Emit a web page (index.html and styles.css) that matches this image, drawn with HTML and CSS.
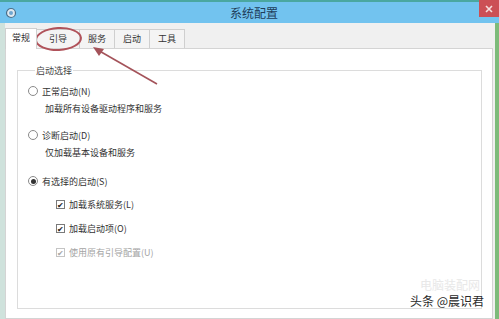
FILE: index.html
```html
<!DOCTYPE html>
<html lang="zh-CN">
<head>
    <meta charset="UTF-8">
    <title>系统配置</title>
    <link rel="stylesheet" href="styles.css">
</head>
<body>
    <div class="window">
        <div class="titlebar">
            <svg class="app-icon" width="12" height="12" viewBox="0 0 12 12">
                <circle cx="6" cy="6" r="4.5" fill="#dfe9f0" stroke="#4a6f8a" stroke-width="1.2"/>
                <circle cx="6" cy="6" r="2" fill="#6fa6d0"/>
            </svg>
            <div class="title">系统配置</div>
            <div class="close-btn">
                <svg width="8" height="8" viewBox="0 0 8 8">
                    <path d="M1 1 L7 7 M7 1 L1 7" stroke="#f6dede" stroke-width="1.6"/>
                </svg>
            </div>
        </div>

        <div class="body">
            <div class="tabs">
                <div class="tab active">常规</div>
                <div class="tab wide">引导</div>
                <div class="tab">服务</div>
                <div class="tab">启动</div>
                <div class="tab">工具</div>
            </div>

            <div class="panel">
                <fieldset class="group">
                    <legend>启动选择</legend>

                    <div class="option">
                        <span class="radio"></span>
                        <span>正常启动(N)</span>
                    </div>
                    <div class="desc">加载所有设备驱动程序和服务</div>

                    <div class="option">
                        <span class="radio"></span>
                        <span>诊断启动(D)</span>
                    </div>
                    <div class="desc">仅加载基本设备和服务</div>

                    <div class="option last">
                        <span class="radio checked"></span>
                        <span>有选择的启动(S)</span>
                    </div>

                    <div class="checks">
                        <div class="check">
                            <span class="box">&#10004;</span>
                            <span>加载系统服务(L)</span>
                        </div>
                        <div class="check">
                            <span class="box">&#10004;</span>
                            <span>加载启动项(O)</span>
                        </div>
                        <div class="check disabled">
                            <span class="box">&#10004;</span>
                            <span>使用原有引导配置(U)</span>
                        </div>
                    </div>
                </fieldset>
            </div>
        </div>
    </div>

    <!-- 标注 -->
    <div class="ring"></div>
    <svg class="arrow" width="499" height="319" viewBox="0 0 499 319">
        <line x1="157" y1="84" x2="96" y2="49" stroke="#a4535a" stroke-width="1.6"/>
        <path d="M93 47 L104 49 L99 56 Z" fill="#a4535a"/>
    </svg>

    <div class="mark-faint">电脑装配网</div>
    <div class="mark">头条 @晨识君</div>
</body>
</html>
```

FILE: styles.css
```css
* {
    margin: 0;
    padding: 0;
    box-sizing: border-box;
}

html {
    overflow: hidden;
}

body {
    width: 499px;
    height: 319px;
    overflow: hidden;
    position: relative;
    background-color: #f0f0f0;
    font-family: "Noto Sans CJK SC", "Noto Sans", sans-serif;
    font-size: 9px;
    color: #333;
}

.window {
    height: 319px;
    display: flex;
    flex-direction: column;
    overflow: hidden;
}

.titlebar {
    height: 23px;
    flex-shrink: 0;
    display: flex;
    align-items: center;
    background-color: #72c3ef;
    border-top: 2px solid #4aa7a0;
    padding-left: 5px;
    position: relative;
}

.title {
    flex: 1;
    text-align: center;
    font-size: 12px;
    color: #1e3d5a;
    padding-right: 8px;
}

/* 关闭按钮盖在标题栏右上角 */
.close-btn {
    position: absolute;
    right: 0;
    top: -2px;
    width: 20px;
    height: 17px;
    z-index: 5;
    background-color: #cc4f55;
    display: flex;
    align-items: center;
    justify-content: center;
}

.body {
    flex: 1;
    display: flex;
    flex-direction: column;
    padding-top: 6px;
    border-left: 5px solid #cfe2dc;
    border-right: 4px solid #7dbb7a;
    overflow: hidden;
}

.tabs {
    display: flex;
    align-items: flex-end;
    height: 19px;
    padding-left: 1px;
}

.tab {
    height: 19px;
    padding: 0 8px;
    line-height: 18px;
    background-color: #f4f4f4;
    border: 1px solid #cfcfcf;
    border-bottom: none;
    margin-left: -1px;
}

.tab.wide {
    padding: 0 12px;
}

.tab.active {
    height: 21px;
    background-color: #fff;
    padding: 0 6px;
    position: relative;
    z-index: 1;
    margin-bottom: -1px;
}

.panel {
    flex: 1;
    background-color: #fff;
    border: 1px solid #d4d4d4;
    margin-right: 2px;
    padding: 15px 10px 0 11px;
    overflow: hidden;
}

.group {
    height: 245px;
    border: 1px solid #dcdcdc;
    padding: 3px 0 0 10px;
}

.group legend {
    margin-left: 7px;
    padding: 0 1px;
    color: #444;
}

.option {
    display: flex;
    align-items: center;
    gap: 4px;
    height: 14px;
    margin-top: 4px;
}

.option.last {
    margin-top: 14px;
}

.desc {
    padding-left: 17px;
    margin-top: 4px;
    height: 14px;
    line-height: 14px;
    margin-bottom: 12px;
}

.radio {
    width: 10px;
    height: 10px;
    border: 1px solid #8a8a8a;
    border-radius: 50%;
    background-color: #fff;
    display: flex;
    align-items: center;
    justify-content: center;
}

.radio.checked::after {
    content: "";
    width: 5px;
    height: 5px;
    border-radius: 50%;
    background-color: #333;
}

.checks {
    padding-left: 28px;
    margin-top: 9px;
    display: flex;
    flex-direction: column;
    gap: 10px;
}

.check {
    display: flex;
    align-items: center;
    gap: 4px;
    height: 14px;
}

.box {
    width: 9px;
    height: 9px;
    border: 1px solid #7a7a7a;
    font-size: 8px;
    line-height: 8px;
    text-align: center;
    color: #222;
    background-color: #fff;
}

.check.disabled {
    color: #a4a4a4;
}

.check.disabled .box {
    border-color: #c4c4c4;
    color: #a8a8a8;
}

.ring {
    position: absolute;
    left: 35px;
    top: 27px;
    width: 47px;
    height: 24px;
    border: 2px solid #b0525a;
    border-radius: 50%;
    transform: rotate(-3deg);
}

.arrow {
    position: absolute;
    left: 0;
    top: 0;
}

.mark-faint {
    position: absolute;
    left: 420px;
    top: 278px;
    font-size: 12px;
    line-height: 13px;
    color: #e8e8e8;
}

.mark {
    position: absolute;
    left: 410px;
    top: 293px;
    font-size: 12px;
    line-height: 15px;
    color: #2a2a2a;
    text-shadow: 0 0 2px #fff, 0 0 2px #fff;
}
```
